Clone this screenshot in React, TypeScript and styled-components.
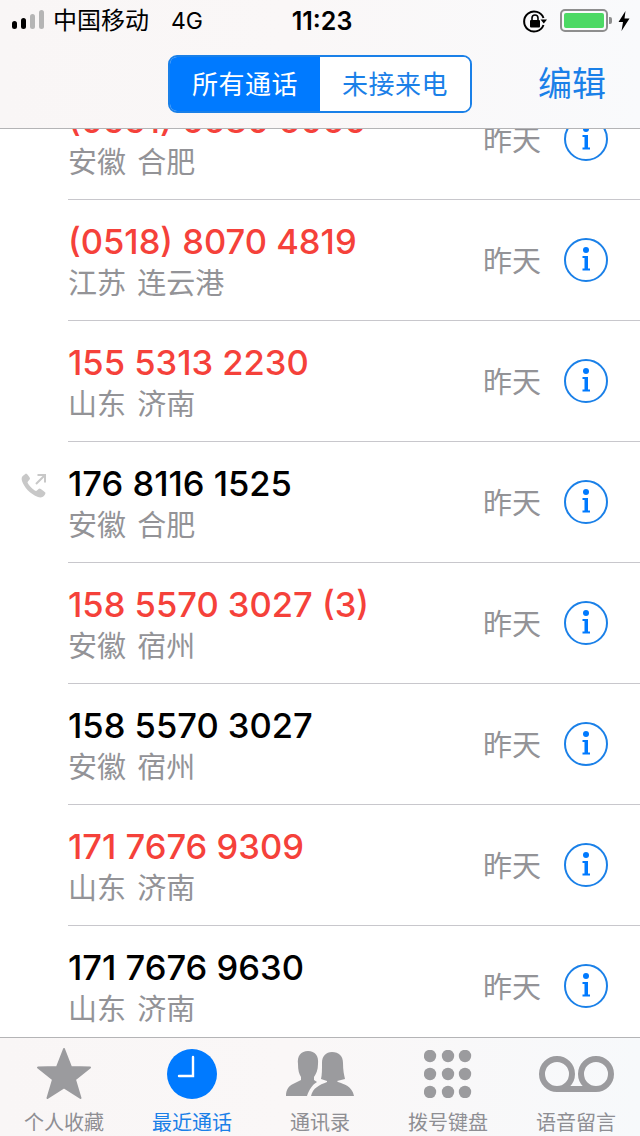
import React from 'react';
import styled, { createGlobalStyle } from 'styled-components';

interface Call {
	number: string;
	place: string;
	missed?: boolean;
	outgoing?: boolean;
}

const calls: Call[] = [
	{ number: '(0551) 6680 6060', place: '安徽 合肥', missed: true },
	{ number: '(0518) 8070 4819', place: '江苏 连云港', missed: true },
	{ number: '155 5313 2230', place: '山东 济南', missed: true },
	{ number: '176 8116 1525', place: '安徽 合肥', outgoing: true },
	{ number: '158 5570 3027 (3)', place: '安徽 宿州', missed: true },
	{ number: '158 5570 3027', place: '安徽 宿州' },
	{ number: '171 7676 9309', place: '山东 济南', missed: true },
	{ number: '171 7676 9630', place: '山东 济南' }
];

const GlobalStyle = createGlobalStyle`
	html, body {
		margin: 0;
		padding: 0;
		background: #fff;
	}
	* {
		box-sizing: border-box;
	}
`;

const FONT = `Inter, "Noto Sans CJK SC", sans-serif`;
const BLUE = '#007aff';
const TAB_GREY = '#9b9b9e';

const Screen = styled.div`
	width: 640px;
	height: 1136px;
	display: flex;
	flex-direction: column;
	overflow: hidden;
	background: #fff;
	font-family: ${FONT};
`;

const Header = styled.header`
	position: relative;
	z-index: 2;
	height: 129px;
	flex: none;
	background: linear-gradient(90deg, #f9f6f6 0%, #faf7f7 45%, #f9fafc 100%);
	border-bottom: 1px solid #b4b4b6;
`;

const StatusBar = styled.div`
	height: 42px;
	display: grid;
	grid-template-columns: 1fr auto 1fr;
	align-items: center;
	padding: 0 10px 0 12px;
	color: #000;
`;

const StatusLeft = styled.div`
	display: flex;
	align-items: center;
	font-size: 24px;
	line-height: 42px;
`;

const Carrier = styled.span`
	margin-left: 7px;
`;

const Network = styled.span`
	margin-left: 22px;
	font-size: 23px;
`;

const Time = styled.div`
	font-size: 25px;
	font-weight: 600;
	margin-left: 2px;
`;

const StatusRight = styled.div`
	display: flex;
	align-items: center;
	justify-content: flex-end;
`;

const Nav = styled.div`
	height: 86px;
	display: flex;
	align-items: flex-start;
	padding: 13px 34px 0 168px;
	justify-content: space-between;
`;

const Segments = styled.div`
	width: 304px;
	height: 58px;
	display: grid;
	grid-template-columns: 150px 150px;
	border: 2px solid #1a80e8;
	border-radius: 9px;
	overflow: hidden;
`;

const Segment = styled.div<{ $active?: boolean }>`
	display: flex;
	align-items: center;
	justify-content: center;
	font-size: 26px;
	letter-spacing: 0.5px;
	padding-bottom: 3px;
	color: ${(props) => (props.$active ? '#fff' : '#1a80e8')};
	background: ${(props) => (props.$active ? BLUE : '#fff')};
`;

const EditButton = styled.div`
	font-size: 34px;
	line-height: 58px;
	color: #1a80e8;
`;

const List = styled.div`
	flex: 1;
	min-height: 0;
	overflow: hidden;
`;

// first row is scrolled partly under the header
const ListInner = styled.div`
	margin-top: -50px;
`;

const Row = styled.div`
	position: relative;
	height: 121px;
	margin-left: 68px;
	border-bottom: 1px solid #c8c7cc;
	display: flex;
	justify-content: space-between;
`;

const CallInfo = styled.div`
	padding-top: 21px;
`;

const PhoneNumber = styled.div<{ $missed?: boolean }>`
	font-size: 34.5px;
	line-height: 42px;
	font-weight: 500;
	white-space: nowrap;
	color: ${(props) => (props.$missed ? '#f5413a' : '#000')};
`;

const Place = styled.div`
	font-size: 29px;
	line-height: 42px;
	color: #939397;
	word-spacing: 3px;
	white-space: pre;
`;

const RowEnd = styled.div`
	display: flex;
	align-items: center;
	gap: 23px;
	padding-right: 32px;
`;

const DateText = styled.div`
	font-size: 29px;
	color: #939397;
	margin-top: -2px;
`;

const OutgoingMark = styled.svg`
	position: absolute;
	left: -47px;
	top: 31px;
`;

const TabBar = styled.nav`
	position: relative;
	z-index: 2;
	height: 99px;
	flex: none;
	display: grid;
	grid-template-columns: repeat(5, 128px);
	background: linear-gradient(90deg, #f9f6f6 0%, #faf7f7 45%, #f7f9fb 100%);
	border-top: 1px solid #b4b4b6;
`;

const Tab = styled.div<{ $active?: boolean }>`
	display: flex;
	flex-direction: column;
	align-items: center;
	color: ${(props) => (props.$active ? '#1a80e8' : '#8e8e93')};
`;

const TabIcon = styled.div`
	height: 72px;
	display: flex;
	align-items: center;
	justify-content: center;
`;

const TabLabel = styled.div`
	font-size: 20px;
	line-height: 26px;
	letter-spacing: 0;
`;

const SignalIcon = () => (
	<svg width="34" height="22" viewBox="0 0 34 22">
		<rect x="0" y="11" width="5" height="8" rx="2.5" fill="#000" />
		<rect x="9" y="8" width="5" height="11" rx="2.5" fill="#000" />
		<rect x="18" y="4" width="5" height="15" rx="2.5" fill="#b5b5b5" />
		<rect x="27" y="0" width="5" height="19" rx="2.5" fill="#b5b5b5" />
	</svg>
);

const RotationLockIcon = () => (
	<svg width="24" height="24" viewBox="0 0 24 24" style={{ marginRight: 13 }}>
		<path d="M20.5 9 A10 10 0 1 0 20.5 16" fill="none" stroke="#000" strokeWidth="2" />
		<path d="M17.5 10.5 L24 10.5 L20.8 14.5 Z" fill="#000" />
		<rect x="7" y="11" width="10" height="7.5" rx="1" fill="#000" />
		<path d="M9 11 V9 a3 3 0 0 1 6 0 V11" fill="none" stroke="#000" strokeWidth="1.6" />
	</svg>
);

const BatteryIcon = () => (
	<svg width="52" height="24" viewBox="0 0 52 24">
		<rect x="1" y="1" width="46" height="21" rx="4" fill="none" stroke="#8e8e8e" strokeWidth="2" />
		<rect x="4" y="4" width="40" height="15" rx="2" fill="#4cd964" />
		<path d="M49 8 h1 a2 2 0 0 1 2 2 v3 a2 2 0 0 1 -2 2 h-1 Z" fill="#8e8e8e" />
	</svg>
);

const BoltIcon = () => (
	<svg width="12" height="20" viewBox="0 0 12 20" style={{ marginLeft: 6 }}>
		<path d="M7.5 0 L0.5 11 H5 L3.5 20 L11.5 7.5 H6.5 Z" fill="#000" />
	</svg>
);

const InfoIcon = () => (
	<svg width="44" height="44" viewBox="0 0 44 44">
		<circle cx="22" cy="22" r="21" fill="none" stroke="#1a80e8" strokeWidth="2" />
		<circle cx="22" cy="12" r="3" fill={BLUE} />
		<path d="M18.5 18 H24 V30.500 H26 V32.500 H18.500 V30.500 H20.500 V20 H18.500 Z" fill={BLUE} />
	</svg>
);

const OutgoingIcon = () => (
	<OutgoingMark width="26" height="26" viewBox="0 0 26 26">
		<path
			d="M3 2 C1 3 0 5 1 8 C3 14 9 21 17 24 C20 25 22.500 24 24 21.500 L24.500 20 C24.500 19 19.500 15.500 18.500 15.500 C17 15.500 16.500 18 15 18 C12 17 7.500 12 6.500 9.500 C6.500 8 9 7 9 5.500 C9 4.500 6 0.500 5 0.500 Z"
			fill="#c8c8c8"
		/>
		<path d="M15 11 L23.500 2.500 M16.500 2 H24 V9.500" fill="none" stroke="#c8c8c8" strokeWidth="2" />
	</OutgoingMark>
);

const StarIcon = () => (
	<svg width="56" height="54" viewBox="0 0 56 54">
		<path
			d="M28 2 L35 20 L54 20.500 L39 32.500 L44.500 51 L28 40.500 L11.500 51 L17 32.500 L2 20.500 L21 20 Z"
			fill={TAB_GREY}
			stroke={TAB_GREY}
			strokeWidth="2"
			strokeLinejoin="round"
		/>
	</svg>
);

const ClockIcon = () => (
	<svg width="50" height="50" viewBox="0 0 50 50">
		<circle cx="25" cy="25" r="25" fill={BLUE} />
		<path d="M26 8 V27 H12" fill="none" stroke="#fff" strokeWidth="2.400" strokeLinecap="round" />
	</svg>
);

const ContactsIcon = () => (
	<svg width="68" height="46" viewBox="0 0 68 46">
		<path
			d="M22 0 C29 0 33 5 32 13 C32 19 30 23 28 26 V29 L31 31 C26 34 23 39 21 45 H0 C0 38 3 35 7 33 L15 29 V26 C13 23 12 19 12 13 C11 5 15 0 22 0 Z"
			fill={TAB_GREY}
		/>
		<path
			d="M46 1 C53 1 57 5 57 12 C57 19 58 24 59 28 L51 30 L52 31 C58 33 66 35 68 45 H25 C27 37 33 34 41 31 V30 L35 28 C36 24 36 18 36 12 C36 5 40 1 46 1 Z"
			fill={TAB_GREY}
		/>
	</svg>
);

const KeypadIcon = () => (
	<svg width="48" height="48" viewBox="0 0 48 48">
		{[6, 24, 42].map((cy) =>
			[6, 24, 41].map((cx) => <circle key={`${cx}-${cy}`} cx={cx} cy={cy} r="6.200" fill={TAB_GREY} />)
		)}
	</svg>
);

const VoicemailIcon = () => (
	<svg width="76" height="36" viewBox="0 0 76 36">
		<circle cx="19" cy="18" r="15" fill="none" stroke={TAB_GREY} strokeWidth="6" />
		<circle cx="58" cy="18" r="15" fill="none" stroke={TAB_GREY} strokeWidth="6" />
		<path d="M19 33 H58" stroke={TAB_GREY} strokeWidth="6" />
	</svg>
);

const tabs = [
	{ label: '个人收藏', icon: <StarIcon /> },
	{ label: '最近通话', icon: <ClockIcon />, active: true },
	{ label: '通讯录', icon: <ContactsIcon /> },
	{ label: '拨号键盘', icon: <KeypadIcon /> },
	{ label: '语音留言', icon: <VoicemailIcon /> }
];

const App = () => {
	return (
		<Screen>
			<GlobalStyle />
			<Header>
				<StatusBar>
					<StatusLeft>
						<SignalIcon />
						<Carrier>中国移动</Carrier>
						<Network>4G</Network>
					</StatusLeft>
					<Time>11:23</Time>
					<StatusRight>
						<RotationLockIcon />
						<BatteryIcon />
						<BoltIcon />
					</StatusRight>
				</StatusBar>
				<Nav>
					<Segments>
						<Segment $active>所有通话</Segment>
						<Segment>未接来电</Segment>
					</Segments>
					<EditButton>编辑</EditButton>
				</Nav>
			</Header>
			<List>
				<ListInner>
					{calls.map((call) => (
						<Row key={call.number}>
							{call.outgoing && <OutgoingIcon />}
							<CallInfo>
								<PhoneNumber $missed={call.missed}>{call.number}</PhoneNumber>
								<Place>{call.place}</Place>
							</CallInfo>
							<RowEnd>
								<DateText>昨天</DateText>
								<InfoIcon />
							</RowEnd>
						</Row>
					))}
				</ListInner>
			</List>
			<TabBar>
				{tabs.map((tab) => (
					<Tab key={tab.label} $active={tab.active}>
						<TabIcon>{tab.icon}</TabIcon>
						<TabLabel>{tab.label}</TabLabel>
					</Tab>
				))}
			</TabBar>
		</Screen>
	);
};

export default App;
